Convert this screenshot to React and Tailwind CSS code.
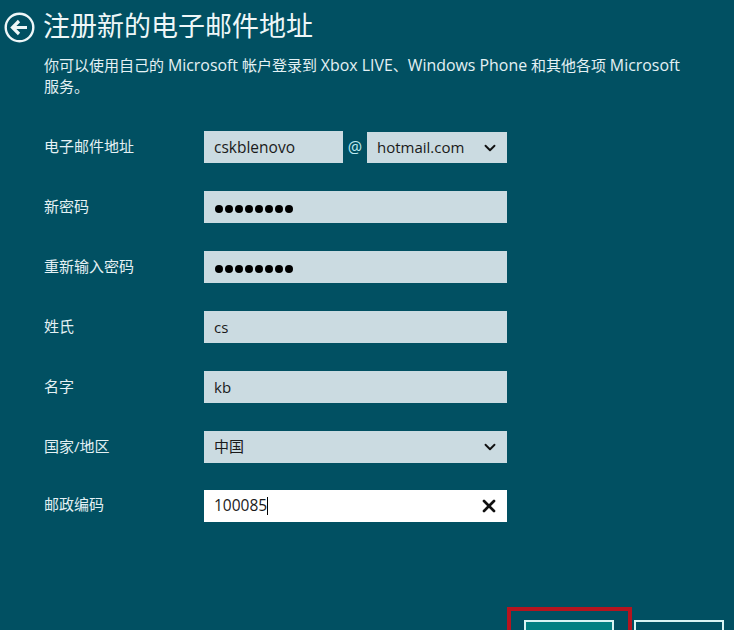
import React from 'react';
import { ChevronDown, X } from 'lucide-react';

const cjk = '[font-family:"Open_Sans","Noto_Sans_CJK_SC",sans-serif]';

const Row = ({ label, children, className = 'h-[60px]', labelClass = 'h-[30px]' }) => (
    <div className={`flex ${className}`}>
        <div className={`w-[160px] flex items-center text-[15px] text-[#e4f1f4] ${labelClass}`}>{label}</div>
        <div className="w-[303px]">{children}</div>
    </div>
);

const Field = ({ children, light, className = 'w-full' }) => (
    <div className={`${className} h-8 pl-[10px] pr-[8px] flex items-center justify-between text-[15px] text-[#1a1a1a] ${light ? 'bg-white' : 'bg-[#cbdbe1]'}`}>
        {children}
    </div>
);

const Dots = () => (
    <div className="flex gap-[2px] pl-[1px] pt-[3px]">
        {[0, 1, 2, 3, 4, 5, 6, 7].map((i) => (
            <span key={i} className="w-2 h-2 rounded-full bg-black" />
        ))}
    </div>
);

const Chevron = () => <ChevronDown size={18} strokeWidth={2.5} className="text-[#111]" />;

export default function App() {
    return (
        <div className={`relative w-[734px] h-[630px] overflow-hidden bg-[#015062] ${cjk}`}>
            <div className="flex items-center pl-[4px] pt-[9px]">
                <svg width="31" height="31" viewBox="0 0 31 31" fill="none" stroke="#eef7f8" className="shrink-0">
                    <circle cx="15.5" cy="15.5" r="13.8" strokeWidth="2.4" />
                    <path d="M23 15.5H9M15 9l-6.5 6.5L15 22" strokeWidth="3.2" />
                </svg>
                <h1 className="ml-[8px] pb-[2px] text-[27px] leading-[34px] text-[#eef7f8]">注册新的电子邮件地址</h1>
            </div>

            <div className="pl-[44px] pr-[50px] pt-[10px]">
                <p className="text-[15px] leading-[21px] text-[#e4f1f4]">
                    你可以使用自己的 <span className="text-[15.9px]">Microsoft</span> 帐户登录到 <span className="text-[15.9px]">Xbox LIVE</span>、<span className="text-[15.9px]">Windows Phone</span> 和其他各项 <span className="text-[15.9px]">Microsoft</span> 服务。
                </p>

                <div className="mt-[34px]">
                    <Row label="电子邮件地址">
                        <div className="flex items-end h-8">
                            <Field className="w-[139px]"><span className="text-[15.5px] pt-[1px]">cskblenovo</span></Field>
                            <span className="w-[24px] text-center text-[16px] leading-8 text-[#bfeaf0]">@</span>
                            <Field className="w-[140px] !h-[31px]">
                                <span className="pb-[1px]">hotmail.com</span>
                                <Chevron />
                            </Field>
                        </div>
                    </Row>
                    <Row label="新密码"><Field><Dots /></Field></Row>
                    <Row label="重新输入密码"><Field><Dots /></Field></Row>
                    <Row label="姓氏"><Field>cs</Field></Row>
                    <Row label="名字"><Field>kb</Field></Row>
                    <Row label="国家/地区" className="h-[59px]">
                        <Field>
                            <span className="pb-[2px]">中国</span>
                            <Chevron />
                        </Field>
                    </Row>
                    <Row label="邮政编码" labelClass="h-[28px]">
                        <Field light>
                            <span className="flex items-center text-[15.5px]">
                                100085
                                <span className="w-px h-[18px] bg-black" />
                            </span>
                            <X size={20} strokeWidth={3.2} className="text-[#111]" />
                        </Field>
                    </Row>
                </div>
            </div>

            {/* red highlight + cut-off buttons at the bottom */}
            <div className="absolute left-[507px] top-[607px] w-[125px] h-[40px] border-[4px] border-[#b5141f]" />
            <div className="absolute left-[524px] top-[620px] w-[90px] h-[30px] border-[2px] border-[#d8f3f3] bg-[#027f82]" />
            <div className="absolute left-[634px] top-[620px] w-[90px] h-[30px] border-[2px] border-[#d8f3f3]" />
        </div>
    );
}
